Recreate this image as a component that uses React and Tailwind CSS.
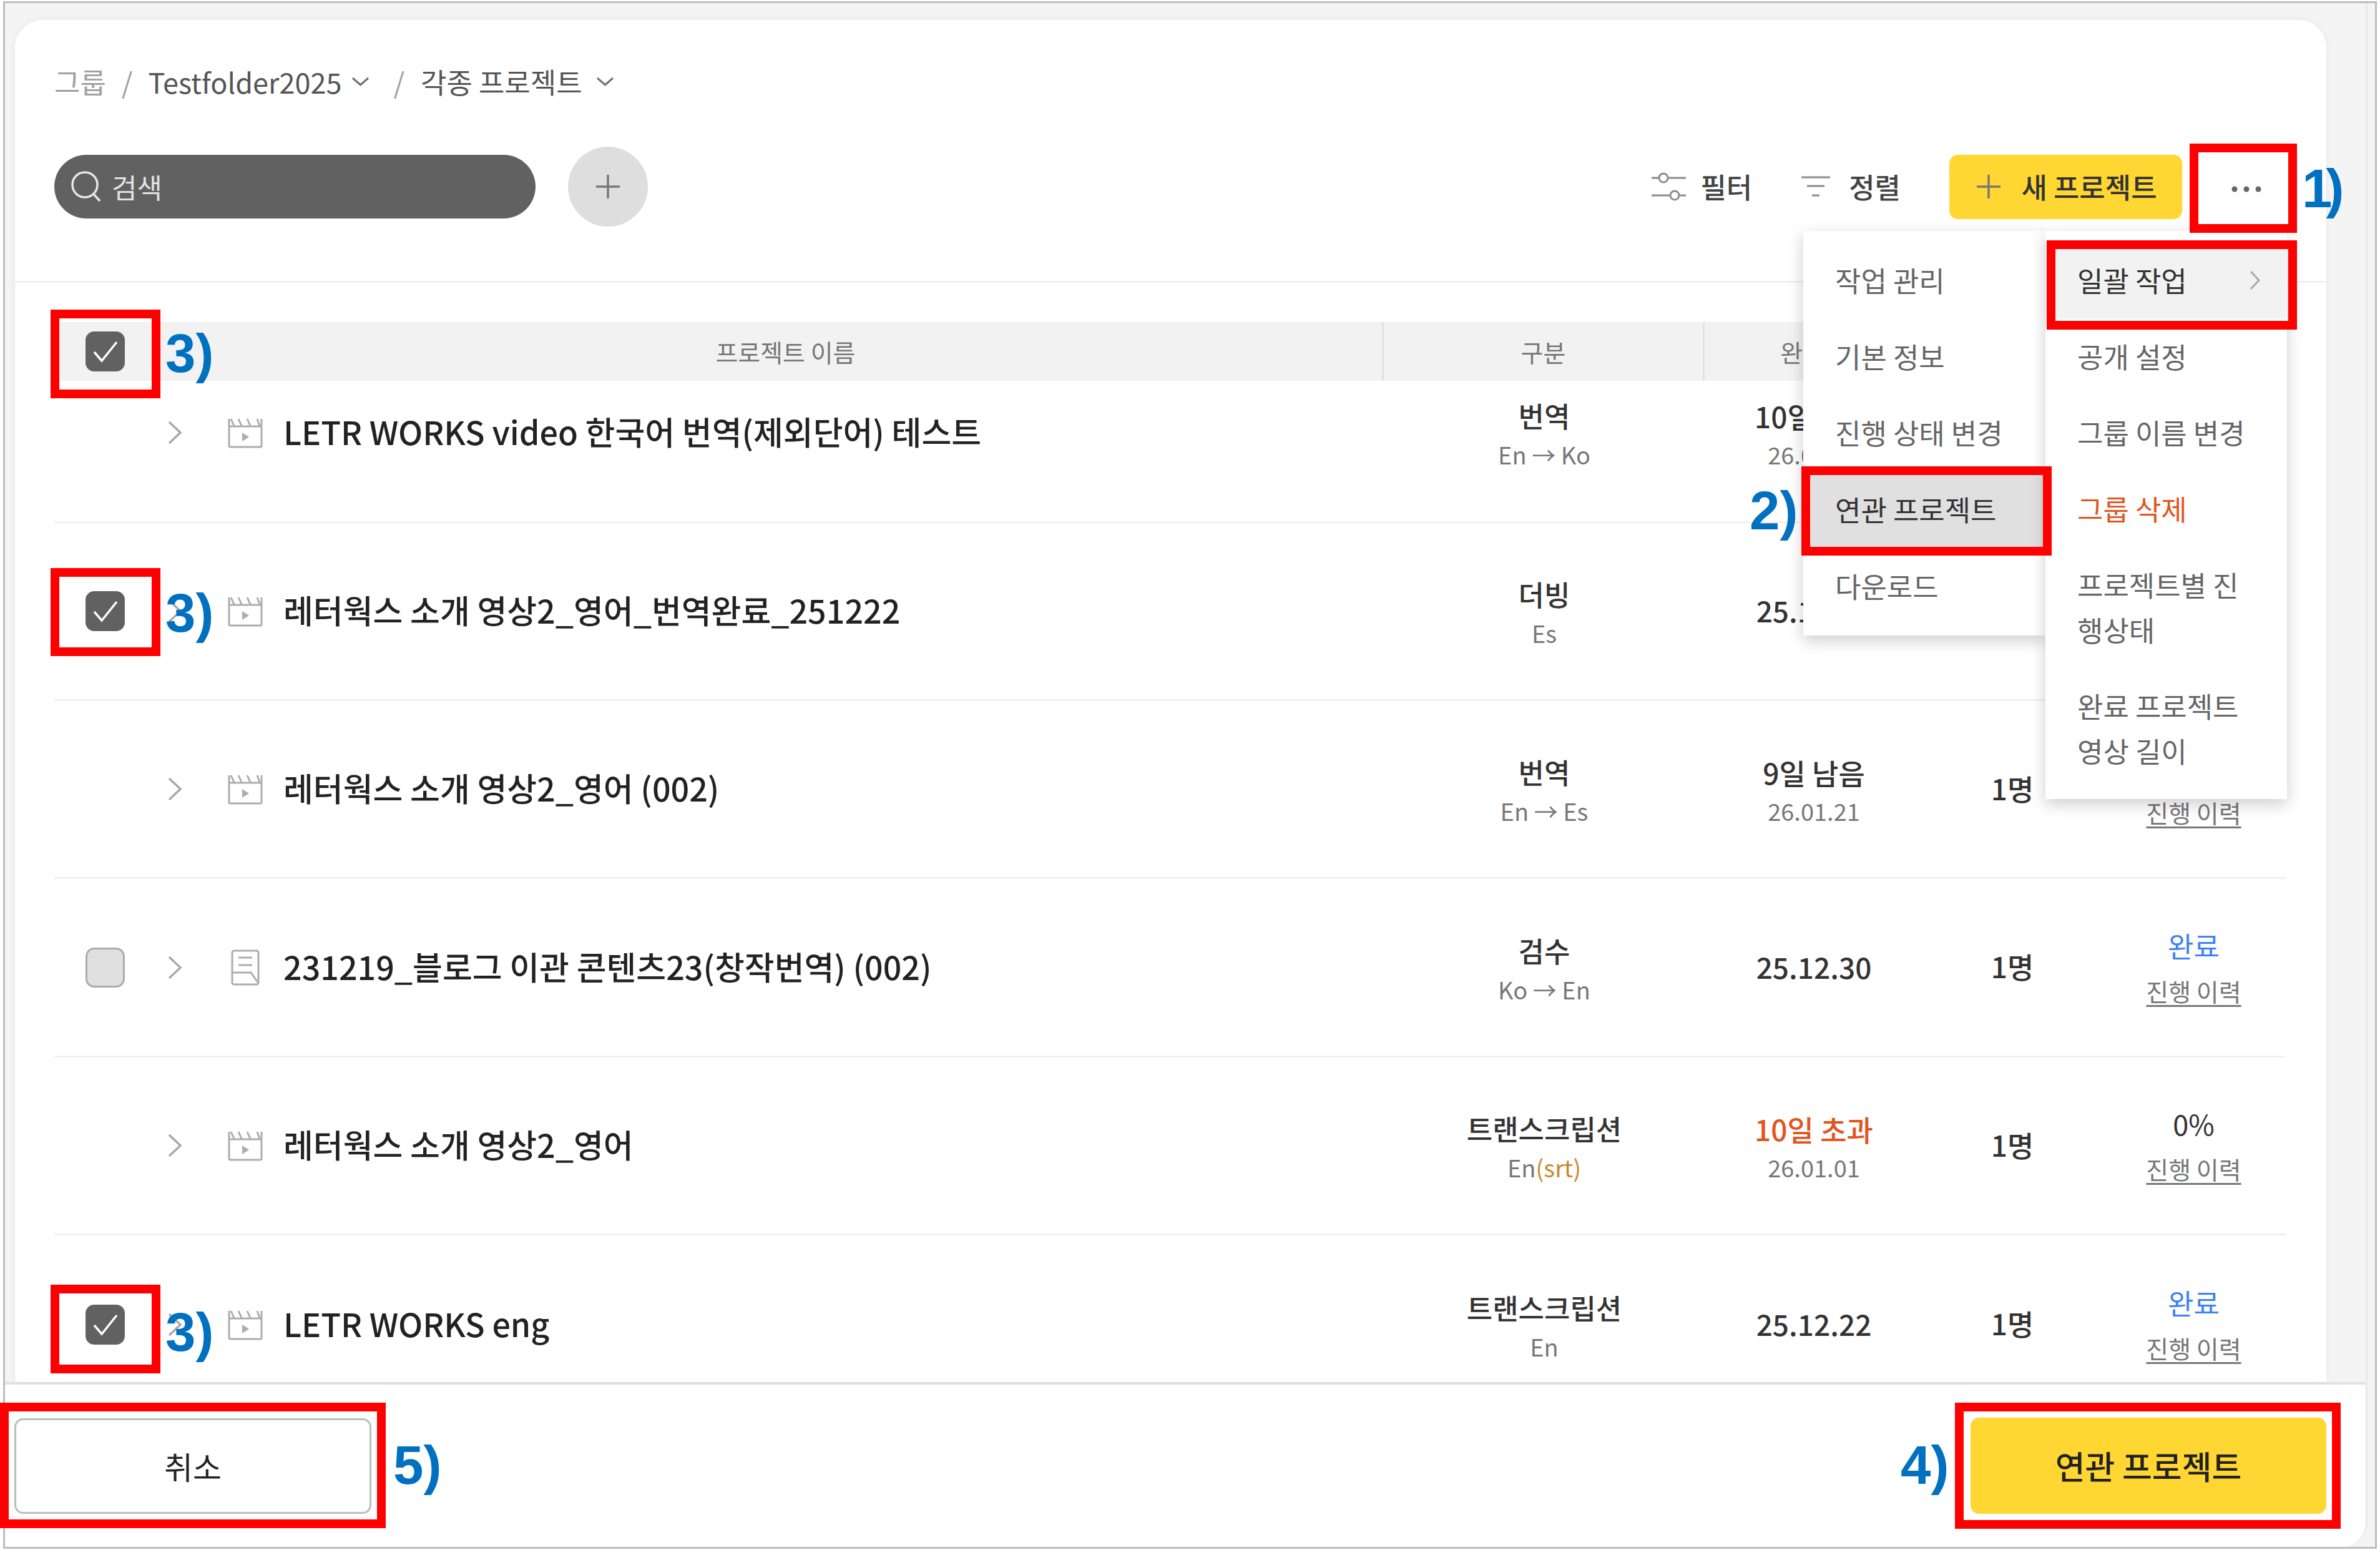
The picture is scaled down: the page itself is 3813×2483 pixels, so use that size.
import React from 'react';

// rows 1-2 sit behind the open menus, so their last two columns stay empty
const rows = [
  { name: 'LETR WORKS video 한국어 번역(제외단어) 테스트', type: '번역', lang: 'En → Ko', date: '10일 남음', sub: '26.01.21', covered: true, rowClass: 'h-[228px] pb-[60px] border-b-[3px] border-[#f1f1f1]' },
  { name: '레터웍스 소개 영상2_영어_번역완료_251222', type: '더빙', lang: 'Es', date: '25.12.22', checked: true, covered: true, rowClass: 'h-[285px] border-b-[3px] border-[#f1f1f1]' },
  { name: '레터웍스 소개 영상2_영어 (002)', type: '번역', lang: 'En → Es', date: '9일 남음', sub: '26.01.21', rowClass: 'h-[285px] border-b-[3px] border-[#f1f1f1]' },
  { name: '231219_블로그 이관 콘텐츠23(창작번역) (002)', type: '검수', lang: 'Ko → En', date: '25.12.30', status: '완료', doc: true, unchecked: true, rowClass: 'h-[286px] border-b-[3px] border-[#f1f1f1]' },
  { name: '레터웍스 소개 영상2_영어', type: '트랜스크립션', lang: 'En', srt: true, date: '10일 초과', sub: '26.01.01', late: true, status: '0%', rowClass: 'h-[285px] border-b-[3px] border-[#f1f1f1]' },
  { name: 'LETR WORKS eng', type: '트랜스크립션', lang: 'En', date: '25.12.22', status: '완료', rowClass: 'h-[285px]', checked: true },
];

const VideoIcon = () => (
  <svg width="56" height="50" viewBox="0 0 56 50" fill="none" stroke="#adadad" strokeWidth="3" className="shrink-0">
    <path d="M2 3v43a2 2 0 0 0 2 2h48a2 2 0 0 0 2-2V3M2 15h52M5 3l5 11M17 3l5 11M31 3l5 11M47 3l4 11" />
    <path d="M23 25l11 7-11 7z" fill="#adadad" stroke="none" />
  </svg>
);

const DocIcon = () => (
  <svg width="46" height="58" viewBox="0 0 46 58" fill="none" stroke="#adadad" strokeWidth="3" className="shrink-0">
    <rect x="2" y="2" width="42" height="54" rx="3" />
    <path d="M12 13h22M12 25h22M2 37h30l12 17" />
  </svg>
);

const Chevron = () => (
  <svg width="24" height="38" viewBox="0 0 24 38" fill="none" stroke="#a8a8a8" strokeWidth="3.5" className="shrink-0">
    <path d="M3 2l18 17L3 36" />
  </svg>
);

const Checkbox = ({ checked }) =>
  checked ? (
    <div className="w-[63px] h-[64px] shrink-0 rounded-[14px] bg-[#616161] flex items-center justify-center">
      <svg width="44" height="36" viewBox="0 0 44 36" fill="none" stroke="#fff" strokeWidth="3.5">
        <path d="M4 19l12 14L40 3" />
      </svg>
    </div>
  ) : (
    <div className="w-[63px] h-[64px] shrink-0 rounded-[14px] bg-[#e0e0e0] border-[3px] border-[#ababab]" />
  );

const SmallDown = () => (
  <svg width="29" height="16" viewBox="0 0 29 16" fill="none" stroke="#707070" strokeWidth="3">
    <path d="M2 2l12.5 11L27 2" />
  </svg>
);

const Note = ({ className, children }) => (
  <div className={`absolute font-['Liberation_Sans',sans-serif] font-bold text-[87px] leading-none text-[#0070c0] ${className}`}>
    {children}
  </div>
);

const Box = ({ className }) => <div className={`absolute border-[14px] border-[#ff0000] ${className}`} />;

const MenuItem = ({ className, children }) => (
  <div className={`pl-[51px] pr-[60px] py-[25px] leading-[72px] ${className}`}>{children}</div>
);

export default function App() {
  return (
    <div className="relative w-[3813px] h-[2483px] overflow-hidden bg-white py-[2px] px-[5px] font-['Noto_Sans_CJK_KR',sans-serif]">
      <div className="h-full border-[3px] border-[#bdbdbd] bg-[#f4f4f4] pr-[12px]">
        <div className="h-full flex flex-col border-r-[3px] border-[#e9e9e9] rounded-br-[40px] overflow-hidden">
          {/* main area */}
          <div className="h-[2213px] shrink-0 bg-[#f4f4f4] pl-[16px] pr-[63px] pt-[27px] border-b-[4px] border-[#e2e2e2]">
            <div className="h-full bg-white rounded-t-[44px] overflow-hidden shadow-[0_0_12px_rgba(0,0,0,0.06)]">
              <div className="pt-[69px] pb-[100px] border-b-[3px] border-[#f0f0f0]">
                <div className="h-[60px] pl-[63px] flex items-center text-[45px] text-[#555]">
                  <span className="text-[#a0a0a0]">그룹</span>
                  <span className="mx-[25px] text-[#a0a0a0]">/</span>
                  <span>Testfolder2025</span>
                  <span className="ml-[16px]"><SmallDown /></span>
                  <span className="ml-[38px] mr-[26px] text-[#a0a0a0]">/</span>
                  <span>각종 프로젝트</span>
                  <span className="ml-[22px]"><SmallDown /></span>
                </div>
                <div className="h-[102px] mt-[87px] pl-[63px] pr-[231px] flex items-center">
                  <div className="w-[771px] h-[102px] rounded-full bg-[#616161] flex items-center pl-[26px] text-[#e2e2e2] text-[44px]">
                    <svg width="50" height="52" viewBox="0 0 50 52" fill="none" stroke="#e8e8e8" strokeWidth="3.5">
                      <circle cx="23" cy="23" r="20" />
                      <path d="M37 38l10 11" />
                    </svg>
                    <span className="ml-[16px]">검색</span>
                  </div>
                  <div className="ml-[52px] w-[128px] h-[128px] rounded-full bg-[#dedede] flex items-center justify-center">
                    <svg width="40" height="40" viewBox="0 0 40 40" stroke="#777" strokeWidth="3.5"><path d="M20 1v38M1 20h38" /></svg>
                  </div>
                  <div className="ml-auto flex items-center text-[45px] font-medium text-[#444]">
                    <svg width="56" height="46" viewBox="0 0 56 46" fill="none" stroke="#8c8c8c" strokeWidth="3">
                      <circle cx="19" cy="9" r="7" />
                      <circle cx="37" cy="37" r="7" />
                      <path d="M0 9h12M26 9h29M0 37h30M44 37h11" />
                    </svg>
                    <span className="ml-[22px]">필터</span>
                    <svg width="48" height="36" viewBox="0 0 48 36" fill="none" stroke="#8c8c8c" strokeWidth="3" className="ml-[78px]">
                      <path d="M1 3h46M10 17h28M18 32h12" />
                    </svg>
                    <span className="ml-[29px]">정렬</span>
                    <div className="ml-[78px] w-[373px] h-[103px] rounded-[14px] bg-[#ffd632] flex items-center justify-center pl-[3px] text-[#333]">
                      <svg width="40" height="40" viewBox="0 0 40 40" stroke="#777" strokeWidth="3.5"><path d="M20 1v38M1 20h38" /></svg>
                      <span className="ml-[32px]">새 프로젝트</span>
                    </div>
                  </div>
                </div>
              </div>

              {/* table */}
              <div className="mt-[63px] pl-[63px] pr-[65px]">
                <div className="h-[94px] bg-[#f2f2f2] grid grid-cols-[2130px_514px_350px_286px_295px] items-center text-[39px] text-[#777]">
                  <div className="h-full flex items-center pl-[50px] border-r-[3px] border-[#e2e2e2]">
                    <Checkbox checked />
                    <div className="flex-1 ml-[103px] text-center">프로젝트 이름</div>
                  </div>
                  <div className="h-full flex items-center justify-center border-r-[3px] border-[#e2e2e2]">구분</div>
                  <div className="text-center">완료일</div>
                </div>
                {rows.map((row) => (
                  <div key={row.name} className={`grid grid-cols-[2130px_514px_350px_286px_295px] items-center ${row.rowClass}`}>
                    <div className="flex items-center pl-[50px]">
                      <div className="w-[63px] h-[64px] shrink-0">
                        {(row.checked || row.unchecked) && <Checkbox checked={row.checked} />}
                      </div>
                      <div className="ml-[68px] w-[24px] shrink-0"><Chevron /></div>
                      <div className="ml-[73px] w-[56px] shrink-0 flex justify-center">{row.doc ? <DocIcon /> : <VideoIcon />}</div>
                      <div className="ml-[33px] pb-[4px] text-[52px] font-medium text-[#222] whitespace-nowrap">{row.name}</div>
                    </div>
                    <div className="text-center pt-[8px]">
                      <div className="text-[45px] leading-[62px] font-medium text-[#333]">{row.type}</div>
                      <div className="text-[38px] leading-[62px] text-[#777]">
                        {row.lang}
                        {row.srt && <span className="text-[#c98a2c]">(srt)</span>}
                      </div>
                    </div>
                    <div className={`text-center ${row.sub ? 'pt-[8px]' : 'pb-[4px]'}`}>
                      <div className={`text-[46px] leading-[62px] font-medium ${row.late ? 'text-[#e2551f]' : 'text-[#333]'}`}>{row.date}</div>
                      {row.sub && <div className="text-[38px] leading-[62px] text-[#777]">{row.sub}</div>}
                    </div>
                    {!row.covered && <div className="text-center pb-[4px] text-[46px] font-medium text-[#333]">1명</div>}
                    {!row.covered && (
                      <div className="text-center pt-[2px]">
                        <div className={`h-[72px] text-[45px] leading-[72px] ${row.status === '완료' ? 'text-[#3b82f6]' : 'text-[#333]'}`}>{row.status}</div>
                        <div className="text-[39px] leading-[72px] text-[#777] underline underline-offset-[6px]">진행 이력</div>
                      </div>
                    )}
                  </div>
                ))}
              </div>
            </div>
          </div>

          {/* footer */}
          <div className="flex-1 bg-white flex items-center justify-between pl-[15px] pr-[63px]">
            <button className="w-[572px] h-[153px] rounded-[14px] border-[3px] border-[#bdbdbd] bg-white text-[50px] text-[#222]">취소</button>
            <button className="w-[570px] h-[154px] rounded-[14px] bg-[#ffd632] text-[52px] font-medium text-[#222]">연관 프로젝트</button>
          </div>
        </div>
      </div>

      {/* dots button */}
      <svg width="48" height="10" viewBox="0 0 48 10" fill="#666" className="absolute left-[3575px] top-[298px]">
        <circle cx="5" cy="5" r="4.5" /><circle cx="24" cy="5" r="4.5" /><circle cx="43" cy="5" r="4.5" />
      </svg>

      {/* open menus */}
      <div className="absolute left-[2889px] top-[370px] w-[388px] h-[648px] pt-[18px] bg-white shadow-[0_8px_24px_rgba(0,0,0,0.2)] text-[45px] text-[#666]">
        <div className="h-[122px] pl-[51px] flex items-center">작업 관리</div>
        <div className="h-[122px] pl-[51px] flex items-center">기본 정보</div>
        <div className="h-[122px] pl-[51px] flex items-center">진행 상태 변경</div>
        <div className="h-[124px] pl-[51px] flex items-center bg-[#e0e0e0] text-[#333]">연관 프로젝트</div>
        <div className="h-[122px] pl-[51px] flex items-center">다운로드</div>
      </div>
      <div className="absolute left-[3277px] top-[370px] w-[387px] h-[910px] pt-[18px] bg-white shadow-[0_8px_24px_rgba(0,0,0,0.2)] text-[45px] text-[#666]">
        <div className="h-[122px] pl-[51px] pr-[42px] flex items-center justify-between bg-[#f2f2f2] text-[#333]">
          <span>일괄 작업</span>
          <svg width="18" height="32" viewBox="0 0 18 32" fill="none" stroke="#a8a8a8" strokeWidth="3"><path d="M2 2l13 14L2 30" /></svg>
        </div>
        <MenuItem>공개 설정</MenuItem>
        <MenuItem>그룹 이름 변경</MenuItem>
        <MenuItem className="text-[#e2551f]">그룹 삭제</MenuItem>
        <MenuItem>프로젝트별 진행상태</MenuItem>
        <MenuItem>완료 프로젝트 영상 길이</MenuItem>
      </div>

      {/* annotations */}
      <Box className="left-[3508px] top-[230px] w-[172px] h-[143px]" />
      <Box className="left-[3279px] top-[385px] w-[401px] h-[143px]" />
      <Box className="left-[2886px] top-[747px] w-[401px] h-[143px]" />
      <Box className="left-[81px] top-[496px] w-[176px] h-[142px]" />
      <Box className="left-[81px] top-[910px] w-[176px] h-[141px]" />
      <Box className="left-[81px] top-[2058px] w-[176px] h-[142px]" />
      <Box className="left-[0px] top-[2247px] w-[618px] h-[201px]" />
      <Box className="left-[3132px] top-[2247px] w-[618px] h-[202px]" />
      <Note className="left-[3688px] top-[258px] tracking-[-10px]">1)</Note>
      <Note className="left-[2803px] top-[774px]">2)</Note>
      <Note className="left-[265px] top-[522px]">3)</Note>
      <Note className="left-[265px] top-[938px]">3)</Note>
      <Note className="left-[265px] top-[2090px]">3)</Note>
      <Note className="left-[3045px] top-[2303px]">4)</Note>
      <Note className="left-[630px] top-[2303px]">5)</Note>
    </div>
  );
}
